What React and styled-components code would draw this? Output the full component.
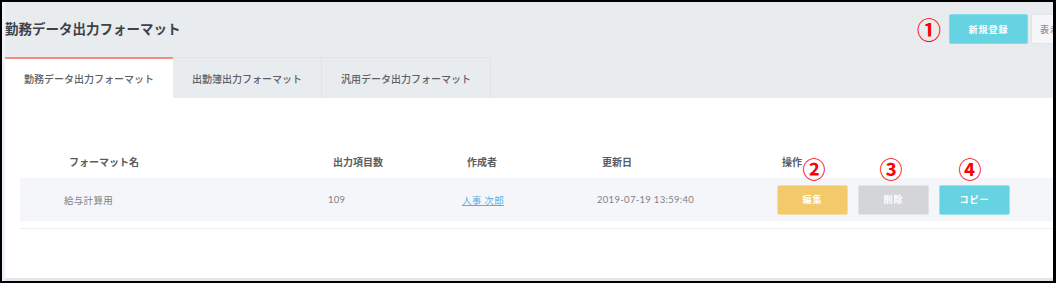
import React from "react";
import styled, { createGlobalStyle } from "styled-components";

const GlobalStyle = createGlobalStyle`
  html, body {
    margin: 0;
    padding: 0;
    background: #000;
  }
  * {
    box-sizing: border-box;
  }
`;

const FONT = `Lato, "Noto Sans CJK JP", "Noto Sans", sans-serif`;

const tabs = [
  { label: "勤務データ出力フォーマット", width: 168, active: true },
  { label: "出勤簿出力フォーマット", width: 149 },
  { label: "汎用データ出力フォーマット", width: 169 },
];

const markers = [
  { n: "①", x: 929, y: 29, size: 24 },
  { n: "②", x: 814, y: 168, size: 23 },
  { n: "③", x: 891, y: 168, size: 23 },
  { n: "④", x: 970, y: 168, size: 23 },
];

function App() {
  return (
    <>
      <GlobalStyle />
      <Frame>
        <Page>
          <TopBar>
            <HeadRow>
              <Title>勤務データ出力フォーマット</Title>
              <Actions>
                <HeadButton $kind="primary">新規登録</HeadButton>
                <HeadButton>表示切替</HeadButton>
              </Actions>
            </HeadRow>
            <TabBar>
              {tabs.map((t) => (
                <Tab key={t.label} $active={t.active} $width={t.width}>
                  {t.label}
                </Tab>
              ))}
            </TabBar>
          </TopBar>

          <Content>
            <Table>
              <HeaderRow>
                <HeadCell>フォーマット名</HeadCell>
                <HeadCell>出力項目数</HeadCell>
                <HeadCell>作成者</HeadCell>
                <HeadCell>更新日</HeadCell>
                <HeadCell>操作</HeadCell>
              </HeaderRow>
              <DataRow>
                <Cell>給与計算用</Cell>
                <Cell>109</Cell>
                <Cell>
                  <UserLink href="#">人事 次郎</UserLink>
                </Cell>
                <Cell>2019-07-19 13:59:40</Cell>
                <ButtonCell>
                  <RowButton $color="#f2c96b">編集</RowButton>
                  <RowButton $color="#d3d5d8">削除</RowButton>
                  <RowButton $color="#66d3e3">コピー</RowButton>
                </ButtonCell>
              </DataRow>
              <Divider />
            </Table>
          </Content>
        </Page>

        {markers.map((m) => (
          <Marker key={m.n} $x={m.x} $y={m.y} $size={m.size}>
            {m.n}
          </Marker>
        ))}
      </Frame>
    </>
  );
}

const Frame = styled.div`
  position: relative;
  width: 1056px;
  height: 283px;
  border-style: solid;
  border-color: #000;
  border-width: 2px 3px 2px 2px;
  background: #eef1f5;
  overflow: hidden;
  display: flex;
  font-family: ${FONT};
`;

const Page = styled.div`
  flex: 1;
  min-width: 0;
  margin-left: 3px;
  display: flex;
  flex-direction: column;
`;

const TopBar = styled.div`
  background: #e9ecef;
  display: flex;
  flex-direction: column;
`;

const HeadRow = styled.div`
  height: 55px;
  padding-top: 12px;
  display: flex;
  align-items: flex-start;
`;

const Title = styled.h1`
  margin: 0;
  font-size: 13.5px;
  line-height: 30px;
  font-weight: 700;
  color: #3d4247;
  white-space: nowrap;
`;

const Actions = styled.div`
  margin-left: auto;
  margin-right: -58px;
  display: flex;
  gap: 3px;
`;

const HeadButton = styled.button`
  width: ${(p) => (p.$kind === "primary" ? "79px" : "80px")};
  height: 30px;
  border-radius: 2px;
  border: 1px solid ${(p) => (p.$kind === "primary" ? "#84dcea" : "#e1e4e8")};
  background: ${(p) => (p.$kind === "primary" ? "#66d3e3" : "#f6f7fa")};
  color: ${(p) => (p.$kind === "primary" ? "#fff" : "#999")};
  font-family: ${FONT};
  font-size: 9px;
  font-weight: 700;
  letter-spacing: 1px;
  padding: 0;
  text-align: ${(p) => (p.$kind === "primary" ? "center" : "left")};
  padding-left: ${(p) => (p.$kind === "primary" ? "0" : "8px")};
`;

const TabBar = styled.div`
  height: 41px;
  display: flex;
`;

const Tab = styled.div`
  width: ${(p) => p.$width}px;
  display: flex;
  align-items: center;
  justify-content: center;
  font-size: 10px;
  font-weight: 500;
  color: #5c6166;
  white-space: nowrap;
  background: ${(p) => (p.$active ? "#fff" : "#e9ecef")};
  border-top: ${(p) => (p.$active ? "2px solid #f38d84" : "1px solid #dfe3e7")};
  border-right: ${(p) => (p.$active ? "none" : "1px solid #dfe3e7")};
`;

const Content = styled.div`
  flex: 1;
  background: #fff;
  padding: 46px 0 0 15px;
  border-bottom: 3px solid #e3e5e8;
`;

const Table = styled.div`
  display: flex;
  flex-direction: column;
`;

const rowGrid = `
  display: grid;
  grid-template-columns: 264px 134px 135px 180px 1fr;
  align-items: center;
`;

const HeaderRow = styled.div`
  ${rowGrid}
  height: 34px;
`;

const HeadCell = styled.div`
  padding-left: 49px;
  font-size: 10px;
  font-weight: 700;
  color: #585d62;
  white-space: nowrap;
`;

const DataRow = styled.div`
  ${rowGrid}
  height: 43px;
  background: #f5f6f9;
`;

const Cell = styled.div`
  padding-left: 44px;
  font-size: 9.5px;
  letter-spacing: 0.3px;
  color: #7d8287;
  white-space: nowrap;
`;

const UserLink = styled.a`
  color: #5aaee4;
  text-decoration: underline;
`;

const ButtonCell = styled.div`
  padding-left: 44px;
  display: flex;
  gap: 10px;
`;

const RowButton = styled.button`
  width: 71px;
  height: 30px;
  padding: 0;
  border-radius: 2px;
  border: 1px solid rgba(255, 255, 255, 0.35);
  background: ${(p) => p.$color};
  color: #fff;
  font-family: ${FONT};
  font-size: 9px;
  font-weight: 700;
  letter-spacing: 1px;
`;

const Divider = styled.div`
  margin-top: 7px;
  height: 1px;
  background: #eceef1;
`;

const Marker = styled.span`
  position: absolute;
  left: ${(p) => p.$x - 2}px;
  top: ${(p) => p.$y - 2}px;
  transform: translate(-50%, -50%);
  font-family: "Noto Sans CJK JP", sans-serif;
  font-size: ${(p) => p.$size}px;
  font-weight: 700;
  line-height: 1;
  color: #ff0000;
`;

export default App;
